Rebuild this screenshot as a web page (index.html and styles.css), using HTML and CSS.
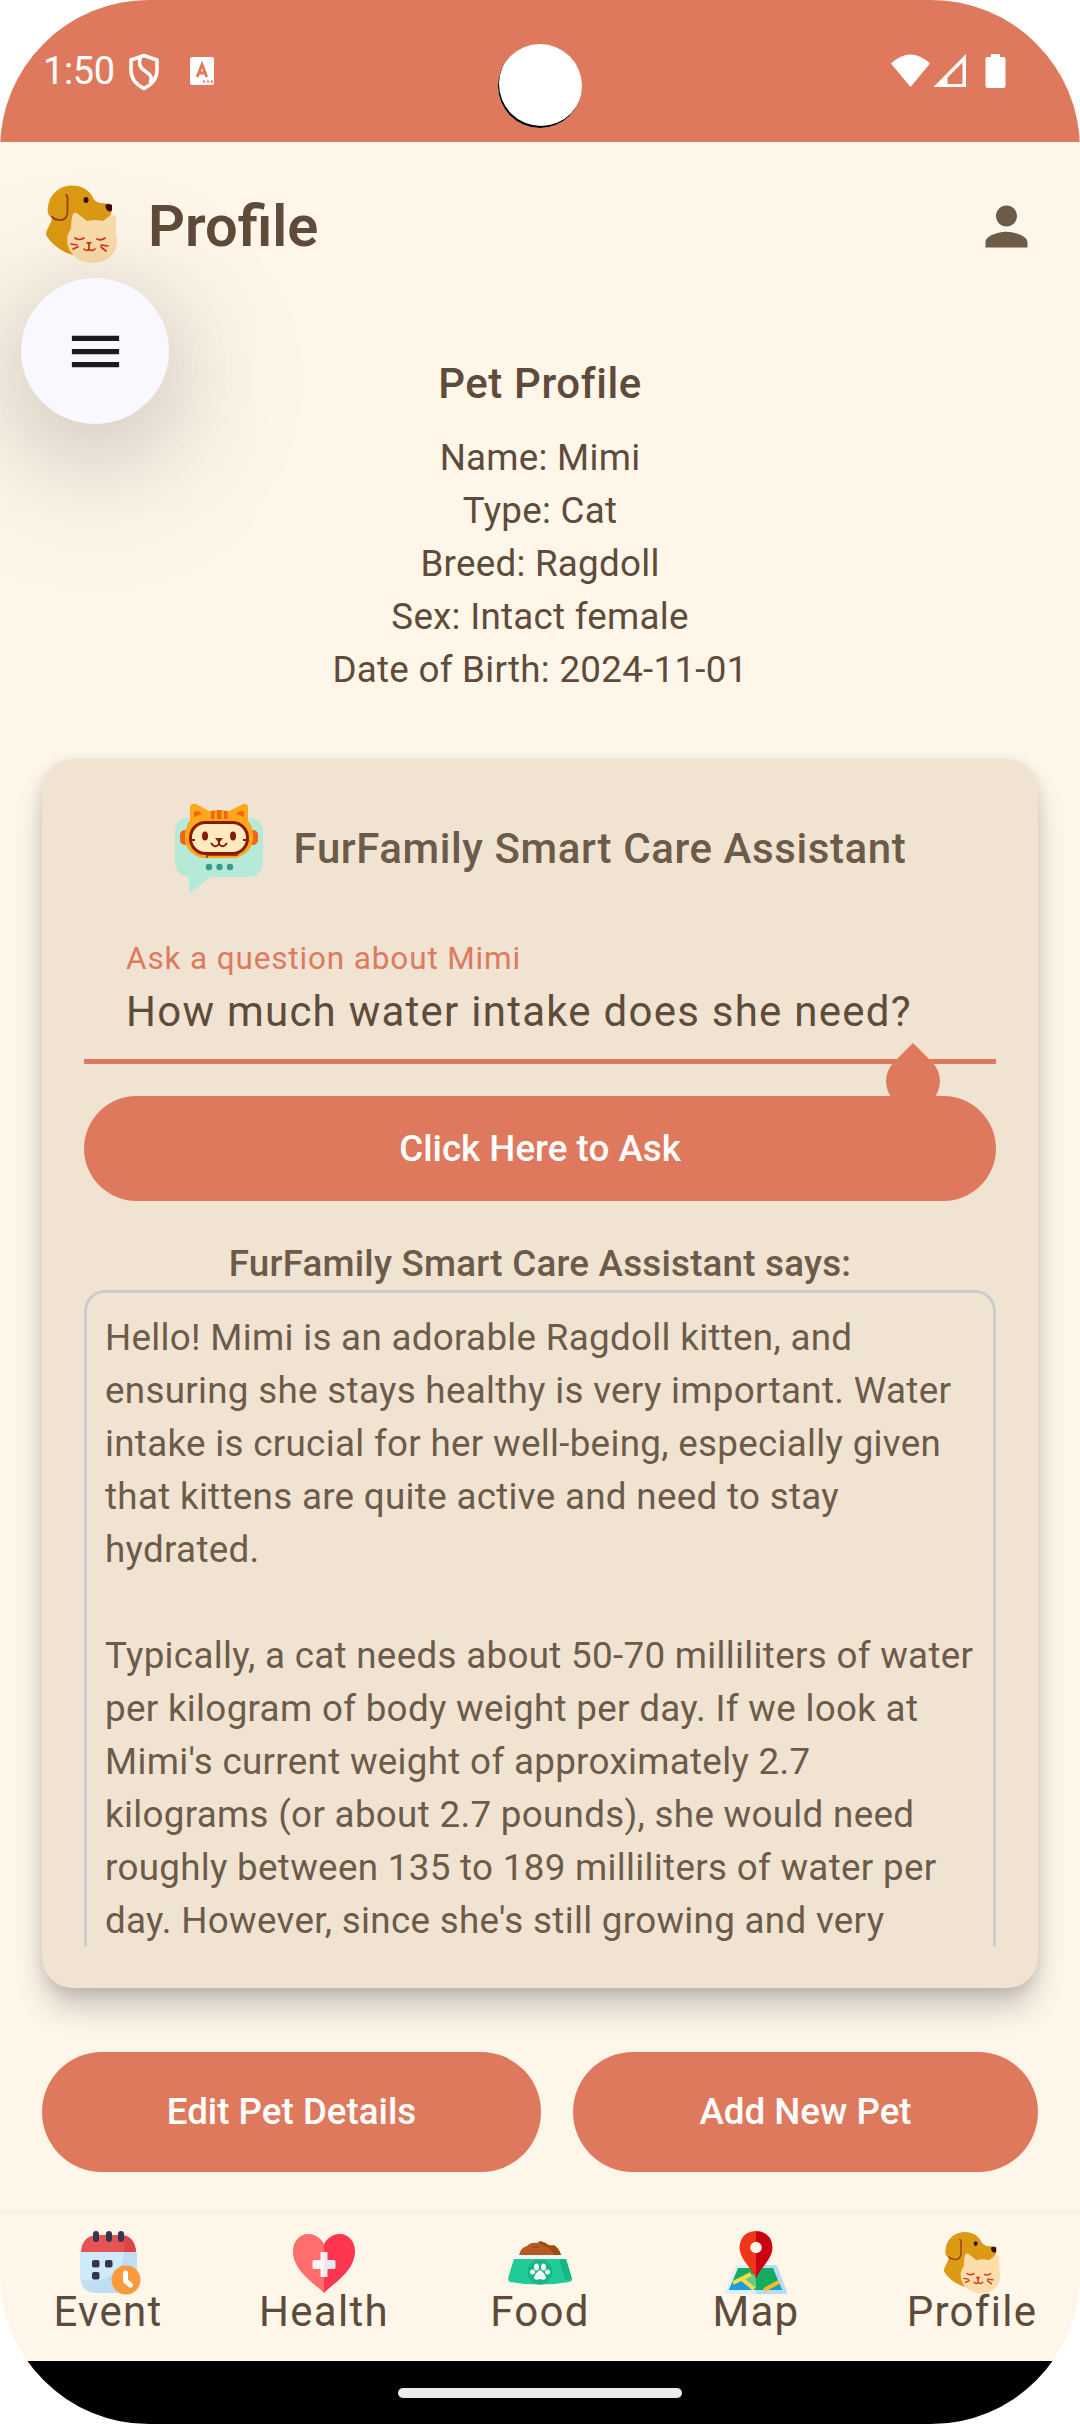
FILE: index.html
```html
<!DOCTYPE html>
<html lang="en">
<head>
<meta charset="utf-8">
<title>Profile</title>
<link rel="stylesheet" href="styles.css">
</head>
<body>
<svg width="0" height="0" class="defs">
  <symbol id="pets" viewBox="0 0 72 78">
    <path fill="#dc9a14" d="M2 22C3 12 10 3 21 1C33-1 42 4 46 11C48 15 50 17 54 18L65 19L66 25C65 31 62 34 57 36L48 52L27 70C16 67 5 59 0 50C0 44 5 40 6 33C2 31 1 27 2 22Z"/>
    <path fill="none" stroke="#9c3f0b" stroke-width="1.8" stroke-linecap="round" d="M20 10Q22 11 21.500 15V28Q20 36 13 35Q9 35 6 32"/>
    <ellipse cx="40" cy="15" rx="2.500" ry="3" fill="#3b0b10"/>
    <path fill="#3b0b10" d="M59.500 20Q62 18 66 20V25Q64 28 61 25Q59 23 59.500 20Z"/>
    <path fill="#fbdcab" d="M27 29Q29 26 32 29L41 36Q49 34 57 36L65 30Q69 29 70 32V50C72 55 71 61 68 67C63 75 55 78 47 78C36 78 29 73 24 66C20 58 20 50 25 44Q25 34 27 29Z"/>
    <g fill="none" stroke="#d3350f" stroke-width="1.700" stroke-linecap="round"><path d="M29 53Q33 56 38 53M51 54Q55 56 59 53M25 59L31 60M27 64L32 62M55 60L62 61M55 62L60 66M43 60V65M38 64Q41 67 43 64Q46 67 49 64"/></g>
    <path fill="#d3350f" d="M40 57H46L43 61Z"/>
  </symbol>
</svg>
<div class="phone">
  <header class="status">
    <span class="time">1:50</span>
    <svg class="shield" width="32" height="38" viewBox="0 0 32 38"><path d="M16 2.500L29 7V17C29 26 23 32 16 35.500C9 32 3 26 3 17V7ZM12.500 4C10.500 10 11 14 17 18C23 22 25 25 22 30" fill="none" stroke="#fff" stroke-width="3.500" stroke-linejoin="round"/></svg>
    <svg class="abox" width="24" height="28" viewBox="0 0 24 28"><rect width="24" height="28" rx="2.500" fill="#fff"/><path d="M7.200 20L12 7.500L16.800 20M9 16H15" fill="none" stroke="#df795e" stroke-width="2.800"/><path d="M13 24.500h2.200M17 24.500h2.200M20.800 24.500h2.200" stroke="#df795e" stroke-width="2.200"/></svg>
    <svg class="sys" width="116" height="36" viewBox="0 0 116 36"><path d="M1 9.500Q20.500-8.500 40 9.500L20.500 33Z" fill="#fff"/><path fill="#fff" fill-rule="evenodd" d="M76 0V33H43.500ZM72.500 8.500L57.500 23.500V30H72.500Z"/><path fill="#fff" d="M101 0h9v3h3.500q2 0 2 2v27q0 2-2 2h-16q-2 0-2-2V5q0-2 2-2h3.500Z"/></svg>
  </header>
  <i class="camera"></i>
  <div class="topbar">
    <svg class="logo" width="72" height="78"><use href="#pets"/></svg>
    <h1>Profile</h1>
    <svg class="person" width="63" height="63" viewBox="0 0 24 24"><path fill="#6d5b4a" d="M12 12c2.210 0 4-1.790 4-4s-1.790-4-4-4-4 1.790-4 4 1.790 4 4 4zm0 2c-2.670 0-8 1.340-8 4v2h16v-2c0-2.660-5.330-4-8-4z"/></svg>
  </div>
  <button class="fab" aria-label="Menu"><svg width="63" height="63" viewBox="0 0 24 24"><path fill="#1a1b21" d="M3 18h18v-2H3v2zm0-5h18v-2H3v2zm0-7v2h18V6H3z"/></svg></button>
  <main>
    <section class="pet">
      <h2>Pet Profile</h2>
      <p>Name: Mimi</p><p>Type: Cat</p><p>Breed: Ragdoll</p><p>Sex: Intact female</p><p>Date of Birth: 2024-11-01</p>
    </section>
    <section class="card">
      <div class="cardhead">
        <svg width="90" height="92" viewBox="0 0 90 92">
          <path fill="#b5e9d8" d="M13 15H76Q89 16 89 29V60Q88 73 75 74H37L15 91V74Q1 72 1 59V29Q1 16 13 15Z"/>
          <rect x="6" y="27" width="78" height="15" rx="5" fill="#f1660e"/>
          <path fill="#fda81c" d="M16 4Q17 0 22 1L35 8Q45 6 55 8L69 1Q74 0 74 5V18Q80 24 79 38Q76 51 62 55H28Q14 51 11 39Q10 25 16 17Z"/>
          <path fill="#f1660e" d="M20 9Q24 6 28 11L20 14ZM70 9Q66 6 62 11L70 14ZM37 8h3.500v8h-3.500ZM43 7h4.500v9h-4.500ZM50 8h3.500v8h-3.500Z"/>
          <rect x="16.500" y="19.500" width="57" height="31" rx="15" fill="#ffebbd" stroke="#861c06" stroke-width="3"/>
          <path d="M33 55V52H64" fill="none" stroke="#861c06" stroke-width="1.300"/>
          <ellipse cx="31" cy="33" rx="3" ry="4.500" fill="#861c06"/><ellipse cx="59" cy="33" rx="3" ry="4.500" fill="#861c06"/>
          <path d="M17 37h4M69 37h4M37 40Q41 46 45 41Q49 46 53 40M45 38V41" fill="none" stroke="#861c06" stroke-width="2"/><path fill="#861c06" d="M41 35h8l-4 5Z"/>
          <g fill="#359c8d"><circle cx="35" cy="64" r="3.200"/><circle cx="45.500" cy="64" r="3.200"/><circle cx="56" cy="64" r="3.200"/></g>
        </svg>
        <h2>FurFamily Smart Care Assistant</h2>
      </div>
      <div class="field">
        <label>Ask a question about Mimi</label>
        <div class="value">How much water intake does she need?</div>
        <svg class="drop" width="56" height="66" viewBox="0 0 56 66"><path fill="#df795e" d="M28 0L47 19A27 27 0 1 1 9 19Z"/></svg>
      </div>
      <button class="btn ask">Click Here to Ask</button>
      <h3>FurFamily Smart Care Assistant says:</h3>
      <div class="answer">Hello! Mimi is an adorable Ragdoll kitten, and<br>ensuring she stays healthy is very important. Water<br>intake is crucial for her well-being, especially given<br>that kittens are quite active and need to stay<br>hydrated.<br><br>Typically, a cat needs about 50-70 milliliters of water<br>per kilogram of body weight per day. If we look at<br>Mimi's current weight of approximately 2.7<br>kilograms (or about 2.7 pounds), she would need<br>roughly between 135 to 189 milliliters of water per<br>day. However, since she's still growing and very</div>
    </section>
    <div class="actions"><button class="btn edit">Edit Pet Details</button><button class="btn add">Add New Pet</button></div>
  </main>
  <nav>
    <a><svg class="event" width="62" height="66" viewBox="0 0 62 66">
      <path fill="#cdebf8" d="M1 21H58V48Q56 62 43 62H16Q3 62 1 48Z"/><path fill="#c0def1" d="M45 21H58V48Q56 62 43 62H16Q4 61 2 48C25 54 44 43 45 21Z"/>
      <path fill="#e55353" d="M2 21Q3 5 18 4H41Q56 5 57 21Z"/><path fill="#dc4247" d="M45 4Q56 7 57 21H46Z"/>
      <g fill="#36344e"><rect x="14" y="0" width="6" height="11" rx="3"/><rect x="27" y="0" width="6" height="11" rx="3"/><rect x="39" y="0" width="6" height="11" rx="3"/><rect x="13" y="29" width="7.500" height="7.500" rx="2"/><rect x="26" y="29" width="7.500" height="7.500" rx="2"/><rect x="13" y="41" width="7.500" height="7.500" rx="2"/></g>
      <circle cx="47" cy="49" r="14.500" fill="#f99a3d"/><path d="M46.500 42V50L51.500 54" fill="none" stroke="#fff" stroke-width="5" stroke-linecap="round" stroke-linejoin="round"/></svg><span>Event</span></a>
    <a><svg width="64" height="66" viewBox="0 0 64 66"><path fill="#ff6d6d" d="M32 13C27 4 20 3 16 3C7 3 1 11 1 20C1 40 22 52 32 62Z"/><path fill="#ff3650" d="M32 13C37 4 44 3 48 3C57 3 63 11 63 20C63 40 42 52 32 62Z"/><path fill="#fff3f4" d="M28.500 21H32v25h-3.500v-8H22q-1.500 0-1.500-1.500v-6q0-1.500 1.500-1.500h6.500Z"/><path fill="#e8eaf0" d="M32 21h3.500v8H42q1.500 0 1.500 1.500v6Q43.500 38 42 38h-6.500v8H32Z"/></svg><span>Health</span></a>
    <a><svg width="64" height="66" viewBox="0 0 64 66"><path fill="#b45a22" d="M11 24Q13 16 19 15Q23 11 29 12L32 10L37 13L42 14Q51 16 53 24Z"/><path fill="#a34a0b" d="M32 10L38 12L41 15L46 14Q51 17 53 24H47L41 17L32 13ZM25 15h5v2h-5Z"/><path fill="#f2f3f7" d="M10 24H53L57 29H6Z"/><path fill="#1fcb96" d="M6 28H58L64 48Q65 50 61 51Q32 56 2 51Q0 50 0 47Z"/><path fill="#19b584" d="M51 28H58L64 48L57 49Z"/><circle cx="32" cy="41" r="12.500" fill="#19b584"/><g fill="#f2f3f7"><path d="M32 39Q35 40 38 46Q38 50 32 48Q26 50 26 46Q29 40 32 39Z"/><ellipse cx="28.500" cy="36" rx="2.500" ry="3.500"/><ellipse cx="35.500" cy="36" rx="2.500" ry="3.500"/><circle cx="24.500" cy="41" r="2.500"/><circle cx="39.500" cy="41" r="2.500"/></g></svg><span>Food</span></a>
    <a><svg width="64" height="66" viewBox="0 0 64 66"><path fill="#dcf0fc" d="M13 34H32V63H1Q0 63 1 61L11 36Z"/><path fill="#b9dafa" d="M32 34H51Q53 34 54 37L63 61Q64 63 61 63H32Z"/><path fill="#12ad60" d="M14 37H49L58 59H5Z"/><path fill="#63cd88" d="M20 47L32 42V59Z"/><path fill="#1a9ce3" d="M8 52L20 48L32 58V59H5ZM46 59L56 54L58 59Z"/><path fill="none" stroke="#ffda43" stroke-width="4" d="M9 52L27 43M18 48L30 58"/><path fill="none" stroke="#ffb92c" stroke-width="4" d="M40 59L55 51"/><path fill="#f03618" d="M32 0Q16 1 15.500 17C16 29 29 38 32 48Z"/><path fill="#cb0010" d="M32 0Q48 1 48.500 17C48 29 35 38 32 48Z"/><circle cx="32" cy="16.500" r="5.700" fill="#fff6ea"/></svg><span>Map</span></a>
    <a><svg class="navpets" width="58" height="66" viewBox="0 0 58 66"><use href="#pets" x="0" y="0" width="57" height="63"/></svg><span>Profile</span></a>
  </nav>
  <footer><i></i></footer>
</div>
</body>
</html>
```
FILE: styles.css
```css
* { box-sizing: border-box; margin: 0; padding: 0; }
body { background: #fff; font-family: Roboto, sans-serif; color: #5e4b39; }
.defs { position: absolute; }
.phone { position: relative; width: 1080px; height: 2424px; background: #fff6ea; border-radius: 149px; overflow: hidden; display: flex; flex-direction: column; }
.status { height: 142px; background: #df795e; color: #fff; display: flex; align-items: flex-start; padding: 54px 74px 0 43px; flex: none; }
.time { font-size: 38px; line-height: 34px; width: 85px; letter-spacing: -.4px; }
.shield { margin-top: -1px; }
.abox { margin: 3px 0 0 30px; }
.sys { margin-left: auto; }
.camera { position: absolute; left: 498px; top: 44px; width: 84px; height: 84px; border-radius: 50%; background: #fff; box-shadow: inset 1px -2px 0 #000; }
.topbar { height: 168px; display: flex; align-items: center; padding: 0 42px 0 46px; flex: none; }
.logo { margin-bottom: 4px; }
h1 { font-size: 57.75px; font-weight: 600; margin-left: 30px; line-height: 72px; }
.person { margin-left: auto; }
.fab { position: absolute; left: 21px; top: 278px; width: 148px; height: 146px; border: 0; border-radius: 50%; background: #f9f8ff; display: flex; align-items: center; justify-content: center; box-shadow: 0 30px 150px 10px rgba(0,0,0,.18), 0 20px 80px rgba(0,0,0,.09); }
main { padding: 0 42px; flex: none; }
.pet { text-align: center; padding-top: 42px; height: 449px; font-size: 36.75px; line-height: 53px; letter-spacing: .26px; }
h2 { font-size: 42px; font-weight: 500; line-height: 63px; letter-spacing: .6px; }
.pet h2 { margin-bottom: 16px; }
.card { height: 1229px; border-radius: 31px; background: #f0e3d2; color: #6d5b4a; padding: 44px 42px 42px; display: flex; flex-direction: column; box-shadow: 0 22px 32px -4px rgba(0,0,0,.22), 0 4px 14px rgba(0,0,0,.1); }
.cardhead { display: flex; justify-content: center; align-items: center; gap: 30px; height: 92px; }
.cardhead h2 { margin-top: -2px; }
.field { position: relative; height: 147px; margin-top: 22px; padding: 21px 42px 0; border-bottom: 5px solid #df795e; }
.field label { display: block; color: #df795e; font-size: 31.5px; line-height: 42px; letter-spacing: .86px; }
.value { color: #5e4b39; font-size: 42px; line-height: 63px; letter-spacing: 1.25px; white-space: nowrap; }
.drop { position: absolute; left: 801px; top: 126px; }
.btn { border: 0; background: #df795e; color: #fff; font: 500 36.75px/52px Roboto, sans-serif; letter-spacing: 0; }
.ask { position: relative; height: 105px; border-radius: 53px; margin-top: 32px; flex: none; }
h3 { font-size: 36.75px; font-weight: 500; line-height: 53px; letter-spacing: .22px; text-align: center; margin-top: 36px; }
.answer { border: 3px solid #ccc; border-bottom: 0; border-radius: 21px 21px 0 0; flex: 1; min-height: 0; padding: 18px; font-size: 36.75px; line-height: 53px; letter-spacing: .31px; white-space: nowrap; overflow: hidden; }
.actions { display: flex; gap: 32px; margin-top: 64px; height: 120px; }
.edit, .add { border-radius: 60px; }
.edit { flex: 0 0 499px; }
.add { flex: 1; }
nav { margin-top: auto; height: 147px; display: flex; box-shadow: 0 -1px 8px rgba(0,0,0,.06); flex: none; }
nav a { flex: 1; display: flex; flex-direction: column; align-items: center; padding-top: 17px; }
nav span { font-size: 42px; line-height: 48px; letter-spacing: 1.3px; margin-top: -9px; }
.event { margin-left: 4px; }
.navpets { margin-left: 2px; }
footer { height: 63px; background: #000; display: flex; justify-content: center; padding-top: 27px; flex: none; }
footer i { width: 284px; height: 10px; border-radius: 5px; background: #ebebeb; }
```
